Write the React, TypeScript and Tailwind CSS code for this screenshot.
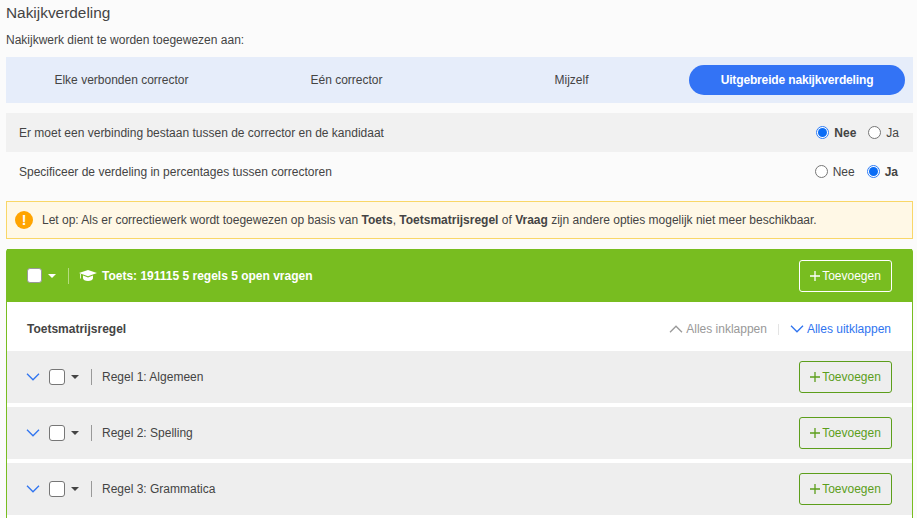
import React from "react";

const Chevron = ({ up = false, className = "" }: { up?: boolean; className?: string }) => (
  <svg width="14" height="8" viewBox="0 0 14 8" fill="none" stroke="currentColor" strokeWidth="1.3" className={className}>
    <path d={up ? "M1 7.2 7 1.2l6 6" : "M1 .8l6 6 6-6"} />
  </svg>
);

const Caret = ({ className = "" }: { className?: string }) => (
  <svg width="8" height="4" viewBox="0 0 8 4" className={className}>
    <path d="M0 0h8L4 4z" fill="currentColor" />
  </svg>
);

const Plus = () => (
  <svg width="10" height="10" viewBox="0 0 10 10" stroke="currentColor" strokeWidth="1.3" className="mr-[2px] shrink-0">
    <path d="M5 0v10M0 5h10" />
  </svg>
);

const Radio = ({ on }: { on: boolean }) =>
  on ? (
    <span className="flex h-[13px] w-[13px] shrink-0 items-center justify-center rounded-full border border-[#2f7df6] bg-white">
      <span className="h-[9px] w-[9px] rounded-full bg-[#0a6cf5]" />
    </span>
  ) : (
    <span className="block h-[13px] w-[13px] shrink-0 rounded-full border border-[#767676] bg-white" />
  );

const Toggle = ({ nee }: { nee: boolean }) => (
  <div className={`flex items-center text-[12px] text-[#444] ${nee ? "-mr-px" : ""}`}>
    <Radio on={nee} />
    <span className={`ml-[5px] ${nee ? "font-bold" : ""}`}>Nee</span>
    <span className="ml-3 block">
      <Radio on={!nee} />
    </span>
    <span className={`ml-[5px] ${nee ? "" : "font-bold"}`}>Ja</span>
  </div>
);

const AddButton = ({ light = false }: { light?: boolean }) => (
  <button
    className={`flex h-8 w-[93px] items-center justify-center rounded-[3px] border text-[12px] ${
      light ? "border-white text-white" : "border-[#5c9e1b] text-[#5c9e1b]"
    }`}
  >
    <Plus />
    Toevoegen
  </button>
);

const Rule = ({ label }: { label: string }) => (
  <div className="flex h-[52px] items-center justify-between bg-[#eeeeee] pl-[19px] pr-5">
    <div className="flex items-center">
      <Chevron className="text-[#2f74f0]" />
      <span className="ml-[9px] h-4 w-4 rounded-[3px] border border-[#767676] bg-white" />
      <Caret className="ml-[6px] text-[#444]" />
      <span className="ml-3 h-4 w-px bg-[#999]" />
      <span className="ml-[10px] text-[12px] text-[#444]">{label}</span>
    </div>
    <AddButton />
  </div>
);

export default function App() {
  return (
    <div
      className="h-[518px] overflow-hidden bg-[#fbfbfb] pl-[6px] pr-1 text-[#444]"
      style={{ fontFamily: '"Liberation Sans", Arial, sans-serif' }}
    >
      <h1 className="h-[29px] pt-[4px] text-[15.4px] leading-[18px] text-[#444]">Nakijkverdeling</h1>
      <p className="h-[28px] pt-[4px] text-[12px] leading-[14px]">Nakijkwerk dient te worden toegewezen aan:</p>

      <div className="flex h-[46px] items-center bg-[#e6edfa] pl-[3px] pr-2 text-[12px]">
        <div className="w-[225px] text-center">Elke verbonden corrector</div>
        <div className="w-[225px] text-center">Eén corrector</div>
        <div className="w-[225px] text-center">Mijzelf</div>
        <div className="ml-[5px] flex h-[30px] flex-1 items-center justify-center rounded-full bg-[#3373f5] font-bold tracking-[-0.15px] text-white">
          Uitgebreide nakijkverdeling
        </div>
      </div>

      <div className="mt-[10px] flex h-[39px] items-center justify-between bg-[#f1f1f1] pl-[13px] pr-[15px] text-[12px]">
        <span>Er moet een verbinding bestaan tussen de corrector en de kandidaat</span>
        <Toggle nee />
      </div>
      <div className="flex h-[39px] items-center justify-between pl-[13px] pr-[15px] text-[12px]">
        <span>Specificeer de verdeling in percentages tussen correctoren</span>
        <Toggle nee={false} />
      </div>

      <div className="mt-[10px] flex h-[38px] items-center border border-[#f9d768] bg-[#fff8e6] pl-2 text-[12px]">
        <span className="flex h-[18px] w-[18px] items-center justify-center rounded-full bg-[#ffa400] text-[14px] font-bold text-white">
          !
        </span>
        <span className="ml-[9px]">
          Let op: Als er correctiewerk wordt toegewezen op basis van <b>Toets</b>, <b>Toetsmatrijsregel</b> of{" "}
          <b>Vraag</b> zijn andere opties mogelijk niet meer beschikbaar.
        </span>
      </div>

      <div className="mt-[10px] rounded-t-[3px] border-x border-[#78bd20] bg-white pb-5">
        <div className="flex h-[53px] items-center justify-between bg-[#78bd20] pl-5 pr-5">
          <div className="flex items-center text-white">
            <span className="h-[15px] w-[15px] rounded-[3px] border border-[#999] bg-white" />
            <Caret className="ml-[6px] text-white" />
            <span className="ml-3 h-4 w-px bg-[#b5dc80]" />
            <svg width="18" height="11" viewBox="0 0 18 11" fill="currentColor" className="ml-[10px]">
              <path d="M9 0 0 3l9 3.2L18 3z" />
              <path d="M4 5.6v2.6C4 9.6 6.2 11 9 11s5-1.4 5-2.8V5.6L9 7.4z" />
              <path d="M1.2 3.8h.8v4.6h-.8z" />
            </svg>
            <span className="ml-[5px] text-[12px] font-bold">Toets: 191115 5 regels 5 open vragen</span>
          </div>
          <AddButton light />
        </div>

        <div className="flex h-[49px] items-center justify-between pl-5 pr-[21px] pt-[5px] text-[12px]">
          <span className="font-bold">Toetsmatrijsregel</span>
          <div className="flex items-center">
            <Chevron up className="text-[#999]" />
            <span className="ml-[3px] text-[#999]">Alles inklappen</span>
            <span className="mx-[11px] h-[11px] w-px bg-[#e4e4e4]" />
            <Chevron className="text-[#2f74f0]" />
            <span className="ml-[3px] text-[#2f74f0]">Alles uitklappen</span>
          </div>
        </div>

        <div className="flex flex-col gap-1">
          <Rule label="Regel 1: Algemeen" />
          <Rule label="Regel 2: Spelling" />
          <Rule label="Regel 3: Grammatica" />
        </div>
      </div>
    </div>
  );
}
